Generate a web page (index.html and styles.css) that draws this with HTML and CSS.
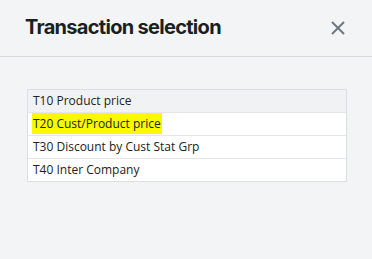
FILE: index.html
```html
<!DOCTYPE html>
<html>
<head>
<meta charset="utf-8">
<link rel="stylesheet" href="styles.css">
</head>
<body>
<div class="dialog">
  <header class="dialog-header">
    <h1 class="dialog-title">Transaction selection</h1>
    <button class="close-btn" aria-label="Close">
      <svg width="16" height="16" viewBox="0 0 16 16"><path d="M2 2 L14 14 M14 2 L2 14" stroke="#6b7884" stroke-width="2" fill="none"/></svg>
    </button>
  </header>
  <div class="dialog-body">
    <ul class="tx-list">
      <li class="tx-item tx-item-first">T10 Product price</li>
      <li class="tx-item"><span class="hl">T20 Cust/Product price</span></li>
      <li class="tx-item">T30 Discount by Cust Stat Grp</li>
      <li class="tx-item">T40 Inter Company</li>
    </ul>
  </div>
</div>
</body>
</html>
```

FILE: styles.css
```css
html, body {
  margin: 0;
  padding: 0;
  background: #f2f4f6;
}
.dialog {
  width: 372px;
  height: 259px;
  background: #f2f4f6;
}
.dialog-header {
  height: 56px;
  border-bottom: 1px solid #d6dadd;
  display: flex;
  align-items: center;
  justify-content: space-between;
  padding: 0 26px 0 25px;
  box-sizing: content-box;
}
.dialog-title {
  margin: 0;
  font-family: Inter, "Liberation Sans", sans-serif;
  font-weight: 700;
  font-size: 20px;
  letter-spacing: -0.7px;
  color: #1b1f23;
  padding-bottom: 2px;
}
.close-btn {
  border: 0;
  background: none;
  padding: 0;
  width: 16px;
  height: 16px;
  display: flex;
}
.dialog-body {
  padding: 32px 0 0 27px;
}
.tx-list {
  list-style: none;
  margin: 0;
  padding: 0;
  width: 318px;
  border: 1px solid #dcdfe2;
  font-family: "Open Sans", "Noto Sans", sans-serif;
  font-size: 12px;
  color: #222;
}
.tx-item {
  height: 22px;
  line-height: 22px;
  padding-left: 5px;
  background: #fff;
  border-top: 1px solid #e4e6e8;
}
.tx-item-first {
  border-top: 0;
  background: #f0f2f4;
}
.hl {
  background: #f9f900;
  padding: 2px 1px;
  margin-left: -1px;
}
```
